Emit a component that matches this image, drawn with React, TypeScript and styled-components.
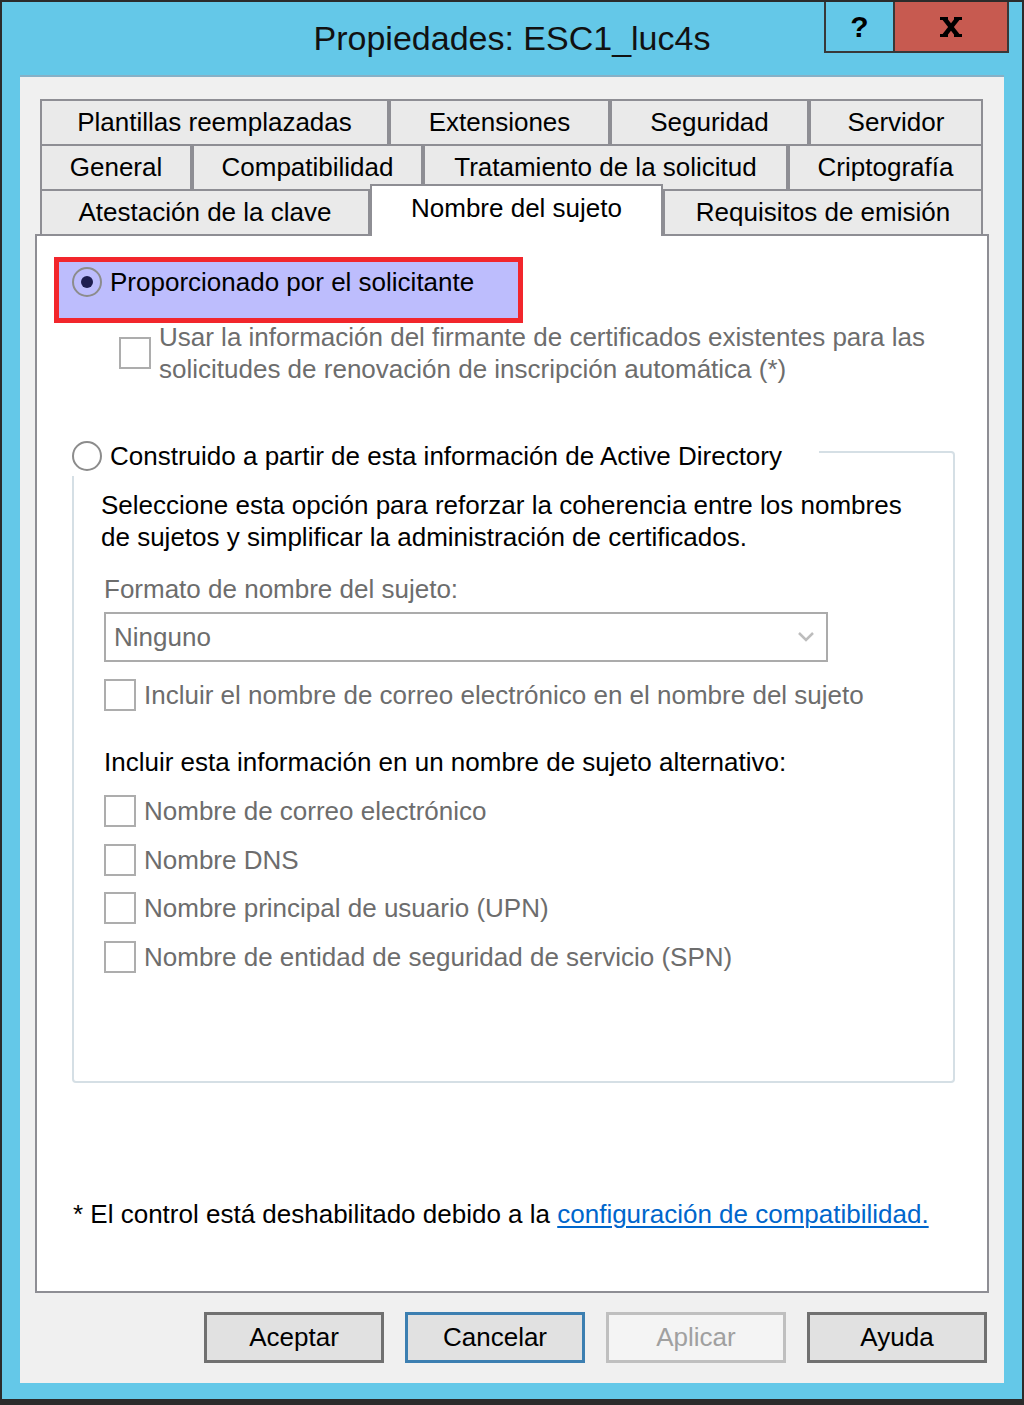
import React from 'react';
import styled, { createGlobalStyle, css } from 'styled-components';

const GlobalStyle = createGlobalStyle`
  html, body { margin: 0; padding: 0; }
  body {
    font-family: "Liberation Sans", Arial, sans-serif;
    background: #64C8E8;
  }
`;

const Window = styled.div`
  width: 1024px;
  height: 1405px;
  box-sizing: border-box;
  background: #64C8E8;
  border-style: solid;
  border-color: #2B2B2B;
  border-width: 2px 2px 6px 2px;
  display: flex;
  flex-direction: column;
`;

const TitleBar = styled.div`
  height: 73px;
  flex: none;
  display: grid;
  grid-template-columns: 1fr auto 1fr;
  align-items: start;
`;

const Title = styled.div`
  grid-column: 2;
  margin-top: 16px;
  line-height: 40px;
  font-size: 34px;
  color: #111;
  white-space: nowrap;
`;

const CaptionButtons = styled.div`
  grid-column: 3;
  justify-self: end;
  margin-right: 13px;
  display: flex;
`;

const CaptionButton = styled.div<{ $close?: boolean }>`
  box-sizing: border-box;
  height: 51px;
  width: ${p => (p.$close ? 116 : 69)}px;
  border-style: solid;
  border-color: #383838;
  border-width: 0 ${p => (p.$close ? 2 : 0)}px 2px 2px;
  background: ${p => (p.$close ? '#C75A50' : 'transparent')};
  display: flex;
  align-items: center;
  justify-content: center;
  font-weight: bold;
  font-size: 30px;
  color: #000;
`;

const Client = styled.div`
  flex: none;
  height: 1308px;
  margin: 0 18px 16px 18px;
  box-sizing: border-box;
  background: #F0F0F0;
  border-top: 2px solid #86B0C6;
  padding: 22px 15px 0 15px;
  display: flex;
  flex-direction: column;
`;

const TabStrip = styled.div`
  margin: 0 6px 0 5px;
  display: flex;
  flex-direction: column;
`;

const TabRow = styled.div`
  display: flex;
  align-items: flex-start;
  height: 45px;
`;

const Tab = styled.div<{ $w: number; $active?: boolean }>`
  box-sizing: border-box;
  flex: none;
  width: ${p => p.$w}px;
  height: 45px;
  border: 2px solid #8E8E94;
  border-bottom: none;
  background: #EAEAEA;
  display: flex;
  align-items: center;
  justify-content: center;
  font-size: 26px;
  color: #000;
  white-space: nowrap;
  ${p =>
    p.$active &&
    css`
      background: #fff;
      height: 52px;
      margin-top: -5px;
      margin-bottom: -2px;
      position: relative;
      z-index: 1;
      padding-bottom: 6px;
    `}
`;

const Panel = styled.div`
  box-sizing: border-box;
  height: 1059px;
  background: #fff;
  border: 2px solid #8E8E94;
  display: flex;
  flex-direction: column;
  align-items: flex-start;
`;

const Highlight = styled.div`
  box-sizing: border-box;
  margin: 21px 0 0 17px;
  width: 469px;
  height: 66px;
  border: 5px solid #F2262C;
  background: #BDBDFD;
  display: flex;
  align-items: flex-start;
  padding: 5px 0 0 13px;
  gap: 8px;
`;

const Radio = styled.span<{ $checked?: boolean }>`
  box-sizing: border-box;
  flex: none;
  width: 30px;
  height: 30px;
  border-radius: 50%;
  border: 2px solid #8C8C8C;
  display: flex;
  align-items: center;
  justify-content: center;
  &::after {
    content: '';
    display: ${p => (p.$checked ? 'block' : 'none')};
    width: 12px;
    height: 12px;
    border-radius: 50%;
    background: #1E1E50;
  }
`;

const Label = styled.span<{ $disabled?: boolean }>`
  font-size: 26px;
  line-height: 30px;
  color: ${p => (p.$disabled ? '#6D6D6D' : '#000')};
  white-space: nowrap;
`;

const CheckRow = styled.div<{ $indent?: number; $top?: number }>`
  display: flex;
  align-items: center;
  gap: 8px;
  margin-left: ${p => p.$indent ?? 0}px;
  margin-top: ${p => p.$top ?? 0}px;
`;

const CheckBox = styled.span`
  box-sizing: border-box;
  flex: none;
  width: 32px;
  height: 32px;
  border: 2px solid #ADADAD;
  background: #fff;
`;

const Text = styled.div<{ $disabled?: boolean; $top?: number; $left?: number }>`
  font-size: 26px;
  line-height: 32px;
  color: ${p => (p.$disabled ? '#6D6D6D' : '#000')};
  white-space: nowrap;
  margin-top: ${p => p.$top ?? 0}px;
  margin-left: ${p => p.$left ?? 0}px;
`;

const GroupBox = styled.div`
  box-sizing: border-box;
  margin: 66px 0 0 35px;
  width: 883px;
  height: 632px;
  border: 2px solid #D5DFE5;
  border-radius: 4px;
  display: flex;
  flex-direction: column;
  align-items: flex-start;
`;

const GroupHeader = styled.div`
  margin: -17px 0 0 -2px;
  height: 40px;
  background: #fff;
  display: flex;
  align-items: center;
  gap: 8px;
  padding-right: 37px;
`;

const GroupContent = styled.div`
  padding-left: 30px;
  display: flex;
  flex-direction: column;
  align-items: flex-start;
`;

const Select = styled.div`
  box-sizing: border-box;
  margin-top: 7px;
  width: 724px;
  height: 50px;
  border: 2px solid #ABABAB;
  background: #fff;
  display: flex;
  align-items: center;
  justify-content: space-between;
  padding: 0 12px 0 8px;
  font-size: 26px;
  color: #6D6D6D;
`;

const Footer = styled.div`
  margin: 115px 0 0 36px;
  font-size: 26px;
  line-height: 32px;
  color: #000;
  white-space: nowrap;
`;

const Link = styled.a`
  color: #0066CC;
  text-decoration: underline;
  text-decoration-thickness: 2px;
  text-underline-offset: 3px;
`;

const ButtonRow = styled.div`
  margin-top: 19px;
  padding-right: 2px;
  display: flex;
  justify-content: flex-end;
  gap: 21px;
`;

const Button = styled.div<{ $variant?: 'default' | 'focus' | 'disabled' }>`
  box-sizing: border-box;
  width: 180px;
  height: 51px;
  border: 3px solid
    ${p => (p.$variant === 'focus' ? '#3C7FB1' : p.$variant === 'disabled' ? '#BFBFBF' : '#707070')};
  background: ${p => (p.$variant === 'disabled' ? '#F4F4F4' : '#E1E1E1')};
  color: ${p => (p.$variant === 'disabled' ? '#A0A0A0' : '#000')};
  display: flex;
  align-items: center;
  justify-content: center;
  font-size: 26px;
`;

const CloseIcon = () => (
  <svg width="22" height="20" viewBox="0 0 22 20">
    <g fill="#000">
      <rect x="0" y="0" width="8" height="3" />
      <rect x="14" y="0" width="8" height="3" />
      <rect x="0" y="17" width="8" height="3" />
      <rect x="14" y="17" width="8" height="3" />
    </g>
    <g stroke="#000" strokeWidth="4.5">
      <line x1="4" y1="1" x2="18" y2="19" />
      <line x1="18" y1="1" x2="4" y2="19" />
    </g>
  </svg>
);

const Chevron = () => (
  <svg width="16" height="10" viewBox="0 0 16 10">
    <polyline points="1,1 8,8 15,1" fill="none" stroke="#BDBDBD" strokeWidth="2.5" />
  </svg>
);

const rows: { label: string; w: number; active?: boolean }[][] = [
  [
    { label: 'Plantillas reemplazadas', w: 349 },
    { label: 'Extensiones', w: 221 },
    { label: 'Seguridad', w: 199 },
    { label: 'Servidor', w: 174 },
  ],
  [
    { label: 'General', w: 152 },
    { label: 'Compatibilidad', w: 231 },
    { label: 'Tratamiento de la solicitud', w: 365 },
    { label: 'Criptografía', w: 195 },
  ],
  [
    { label: 'Atestación de la clave', w: 330 },
    { label: 'Nombre del sujeto', w: 293, active: true },
    { label: 'Requisitos de emisión', w: 320 },
  ],
];

const altNames = [
  'Nombre de correo electrónico',
  'Nombre DNS',
  'Nombre principal de usuario (UPN)',
  'Nombre de entidad de seguridad de servicio (SPN)',
];

export default function App() {
  return (
    <>
      <GlobalStyle />
      <Window>
        <TitleBar>
          <Title>Propiedades: ESC1_luc4s</Title>
          <CaptionButtons>
            <CaptionButton>?</CaptionButton>
            <CaptionButton $close>
              <CloseIcon />
            </CaptionButton>
          </CaptionButtons>
        </TitleBar>
        <Client>
          <TabStrip>
            {rows.map((row, i) => (
              <TabRow key={i}>
                {row.map(t => (
                  <Tab key={t.label} $w={t.w} $active={t.active}>
                    {t.label}
                  </Tab>
                ))}
              </TabRow>
            ))}
          </TabStrip>
          <Panel>
            <Highlight>
              <Radio $checked />
              <Label>Proporcionado por el solicitante</Label>
            </Highlight>
            <CheckRow $indent={82} $top={-2}>
              <CheckBox />
              <Text $disabled>
                Usar la información del firmante de certificados existentes para las
                <br />
                solicitudes de renovación de inscripción automática (*)
              </Text>
            </CheckRow>
            <GroupBox>
              <GroupHeader>
                <Radio />
                <Label>Construido a partir de esta información de Active Directory</Label>
              </GroupHeader>
              <GroupContent>
                <Text $top={13} $left={-3}>
                  Seleccione esta opción para reforzar la coherencia entre los nombres
                  <br />
                  de sujetos y simplificar la administración de certificados.
                </Text>
                <Text $disabled $top={20}>
                  Formato de nombre del sujeto:
                </Text>
                <Select>
                  <span>Ninguno</span>
                  <Chevron />
                </Select>
                <CheckRow $top={17}>
                  <CheckBox />
                  <Text $disabled>Incluir el nombre de correo electrónico en el nombre del sujeto</Text>
                </CheckRow>
                <Text $top={35}>Incluir esta información en un nombre de sujeto alternativo:</Text>
                {altNames.map((n, i) => (
                  <CheckRow key={n} $top={i === 0 ? 17 : 16.5}>
                    <CheckBox />
                    <Text $disabled>{n}</Text>
                  </CheckRow>
                ))}
              </GroupContent>
            </GroupBox>
            <Footer>
              * El control está deshabilitado debido a la{' '}
              <Link href="#">configuración de compatibilidad.</Link>
            </Footer>
          </Panel>
          <ButtonRow>
            <Button>Aceptar</Button>
            <Button $variant="focus">Cancelar</Button>
            <Button $variant="disabled">Aplicar</Button>
            <Button>Ayuda</Button>
          </ButtonRow>
        </Client>
      </Window>
    </>
  );
}
